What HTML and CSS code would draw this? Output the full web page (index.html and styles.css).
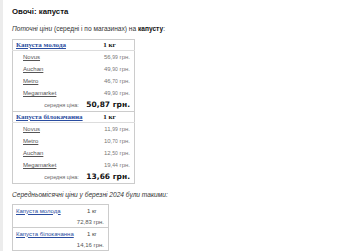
FILE: index.html
```html
<!DOCTYPE html>
<html lang="uk">
<head>
<meta charset="utf-8">
<link rel="stylesheet" href="styles.css">
</head>
<body>
<div class="page">
  <div class="strip"></div>
  <main class="content">
    <h1 class="title">Овочі: капуста</h1>
    <p class="lead"><i>Поточні ціни</i> (середні і по магазинах) на <b>капусту</b>:</p>
    <table class="prices">
      <tr class="head"><th class="name"><a href="#">Капуста молода</a></th><th class="unit">1 кг</th></tr>
      <tr><td class="shop"><a href="#">Novus</a></td><td class="price">56,<small>99</small> грн.</td></tr>
      <tr><td class="shop"><a href="#">Auchan</a></td><td class="price">49,<small>90</small> грн.</td></tr>
      <tr><td class="shop"><a href="#">Metro</a></td><td class="price">46,<small>70</small> грн.</td></tr>
      <tr><td class="shop"><a href="#">Megamarket</a></td><td class="price">49,<small>90</small> грн.</td></tr>
      <tr class="avg"><td class="avg-label">середня ціна:</td><td class="avg-price">50,87 грн.</td></tr>
      <tr class="head"><th class="name"><a href="#">Капуста білокачанна</a></th><th class="unit">1 кг</th></tr>
      <tr><td class="shop"><a href="#">Novus</a></td><td class="price">11,<small>99</small> грн.</td></tr>
      <tr><td class="shop"><a href="#">Metro</a></td><td class="price">10,<small>70</small> грн.</td></tr>
      <tr><td class="shop"><a href="#">Auchan</a></td><td class="price">12,<small>50</small> грн.</td></tr>
      <tr><td class="shop"><a href="#">Megamarket</a></td><td class="price">19,<small>44</small> грн.</td></tr>
      <tr class="avg"><td class="avg-label">середня ціна:</td><td class="avg-price">13,66 грн.</td></tr>
    </table>
    <p class="lead lead2"><i>Середньомісячні ціни у березні 2024 були такими:</i></p>
    <table class="monthly">
      <tr><td class="m-name"><a href="#">Капуста молода</a></td><td class="m-unit">1 кг</td></tr>
      <tr class="m-end"><td></td><td class="m-price">72,83 грн.</td></tr>
      <tr><td class="m-name"><a href="#">Капуста білокачанна</a></td><td class="m-unit">1 кг</td></tr>
      <tr class="m-end"><td></td><td class="m-price">14,16 грн.</td></tr>
    </table>
  </main>
</div>
</body>
</html>
```
FILE: styles.css
```css
html, body { margin: 0; padding: 0; background: #fff; }
body { font-family: "Liberation Sans", Arial, sans-serif; color: #222; }
.page { display: flex; min-height: 251px; }
.strip { width: 3px; background: #ececec; flex: none; }
.content { padding: 0 0 0 9px; }
.title { font-size: 7.8px; line-height: 10px; font-weight: bold; margin: 7px 0 0; color: #111; }
.lead { font-size: 6.6px; line-height: 9px; margin: 7px 0 0; color: #333; }
.lead b { color: #111; }
.prices { margin-top: 6px; border-collapse: collapse; border: 1px solid #ccc; width: 123px; }
.prices td, .prices th { padding: 0; height: 12px; line-height: 8px; }
.prices .head th { border-bottom: 1px solid #ddd; border-top: 1px solid #ccc; height: 10px; font-family: "Liberation Serif", serif; font-size: 7px; font-weight: bold; }
.prices .name { text-align: left; padding-left: 3px; }
.prices .name a { color: #2a4da0; }
.prices .unit { text-align: center; color: #111; }
.prices .shop { font-size: 6px; padding-left: 10px; }
.prices .shop a { color: #555; }
.prices .price { font-size: 6px; color: #777; text-align: right; padding-right: 4px; }
.prices .price small { font-size: 5px; }
.avg-label { font-size: 5.5px; color: #666; text-align: right; padding-right: 6px !important; }
.avg-price { font-size: 7.5px; font-weight: bold; color: #111; text-align: right; padding-right: 4px !important; font-family: "DejaVu Sans", sans-serif; }
.lead2 { margin-top: 6px; }
.monthly { margin-top: 5px; border-collapse: collapse; border: 1px solid #ccc; width: 97px; font-size: 6px; }
.monthly td { padding: 0; height: 11px; line-height: 8px; }
.monthly .m-name { padding-left: 3px; }
.monthly .m-name a { color: #2a4da0; }
.monthly .m-unit { text-align: center; color: #444; }
.monthly .m-price { text-align: right; padding-right: 4px; color: #555; }
.monthly .m-end td { border-bottom: 1px solid #ccc; }
```
